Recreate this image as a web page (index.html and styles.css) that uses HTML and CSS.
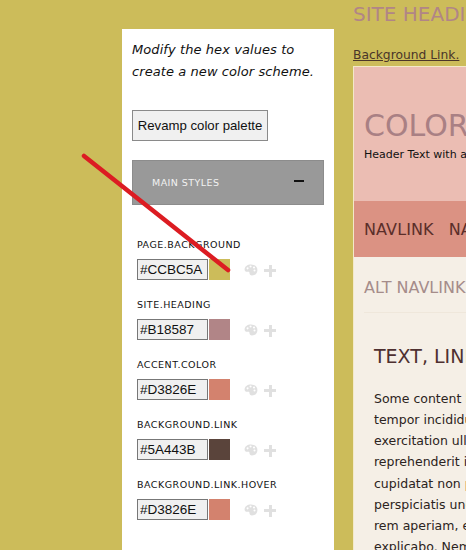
FILE: index.html
```html
<!DOCTYPE html>
<html lang="en">
<head>
  <meta charset="UTF-8">
  <title>Color scheme</title>
  <link rel="stylesheet" href="styles.css">
</head>
<body>
  <svg width="0" height="0" class="defs">
    <symbol id="palette" viewBox="0 0 16 14">
      <path fill-rule="evenodd" d="M8 .5C3.800.5.500 2.900.500 6.300c0 2.300 1.900 3.100 3.600 2.700 1.300-.3 2.100.2 2.100 1.200 0 1.900 1.100 3.300 2.900 3.300 3.900 0 6.400-3 6.400-6.600C15.500 3 12.200.5 8 .5zM4 6.300a1.200 1.200 0 1 1 0-2.400 1.200 1.200 0 0 1 0 2.400zM7.500 4.200a1.200 1.200 0 1 1 0-2.400 1.200 1.200 0 0 1 0 2.400zm4 1.100a1.200 1.200 0 1 1 0-2.400 1.200 1.200 0 0 1 0 2.400zm.6 3.500a1.200 1.200 0 1 1 0-2.400 1.200 1.200 0 0 1 0 2.400z"/>
    </symbol>
  </svg>

  <div class="page">
    <div class="sidebar">
      <p class="intro">Modify the hex values to create a new color scheme.</p>
      <button class="revamp">Revamp color palette</button>

      <div class="accordion">
        <span>Main Styles</span>
        <i class="minus"></i>
      </div>

      <div class="fields">
        <div class="field">
          <label>page.background</label>
          <div class="row">
            <input type="text" value="#CCBC5A">
            <b class="swatch swatch-page"></b>
            <svg class="palette"><use href="#palette"></use></svg>
            <i class="plus"></i>
          </div>
        </div>
        <div class="field">
          <label>site.heading</label>
          <div class="row">
            <input type="text" value="#B18587">
            <b class="swatch swatch-heading"></b>
            <svg class="palette"><use href="#palette"></use></svg>
            <i class="plus"></i>
          </div>
        </div>
        <div class="field">
          <label>accent.color</label>
          <div class="row">
            <input type="text" value="#D3826E">
            <b class="swatch swatch-accent"></b>
            <svg class="palette"><use href="#palette"></use></svg>
            <i class="plus"></i>
          </div>
        </div>
        <div class="field">
          <label>background.link</label>
          <div class="row">
            <input type="text" value="#5A443B">
            <b class="swatch swatch-link"></b>
            <svg class="palette"><use href="#palette"></use></svg>
            <i class="plus"></i>
          </div>
        </div>
        <div class="field">
          <label>background.link.hover</label>
          <div class="row">
            <input type="text" value="#D3826E">
            <b class="swatch swatch-accent"></b>
            <svg class="palette"><use href="#palette"></use></svg>
            <i class="plus"></i>
          </div>
        </div>
      </div>
    </div>

    <div class="preview">
      <h1 class="site-heading">SITE HEADING</h1>
      <a class="bg-link" href="#">Background Link.</a>
      <div class="box">
        <div class="box-header">
          <h2>COLOR SCHEME</h2>
          <p>Header Text with a description</p>
        </div>
        <div class="nav">
          <a href="#">NAVLINK</a>
          <a href="#">NAVLINK</a>
        </div>
        <div class="content">
          <div class="alt-nav">ALT NAVLINK</div>
          <h3>TEXT, LINKS</h3>
          <p>Some content lorem ipsum dolor sit amet, sed do eiusmod<br>
          tempor incididunt ut labore et dolore magna aliqua ut enim<br>
          exercitation ullamco laboris nisi ut aliquip ex ea commodo<br>
          reprehenderit in voluptate velit esse cillum dolore eu fugiat<br>
          cupidatat non proident, sunt in culpa qui officia deserunt<br>
          perspiciatis unde omnis iste natus error sit voluptatem<br>
          rem aperiam, eaque ipsa quae ab illo inventore veritatis<br>
          explicabo. Nemo enim ipsam voluptatem quia voluptas sit</p>
        </div>
      </div>
    </div>
  </div>

  <svg class="arrow" width="466" height="550">
    <line x1="84" y1="156" x2="228" y2="270"></line>
  </svg>
</body>
</html>
```

FILE: styles.css
```css
html, body {
  height: 100%;
}
body {
  margin: 0;
  background-color: #CCBC5A;
  overflow: hidden;
  font-family: 'DejaVu Sans', sans-serif;
}
.defs {
  display: block;
  height: 0;
}
.page {
  display: flex;
  height: 550px;
  padding-left: 122px;
}
.sidebar {
  flex: none;
  width: 212px;
  box-sizing: border-box;
  margin-top: 29px;
  padding: 10px 10px 0;
  background-color: #ffffff;
}
.intro {
  margin: 0;
  font-size: 13px;
  font-style: italic;
  line-height: 22px;
  letter-spacing: 0.08px;
  color: #111;
}
.revamp {
  display: block;
  width: 136px;
  height: 31px;
  margin-top: 27px;
  padding: 0;
  background-color: #f0f0f0;
  border: 1px solid #8a8a8a;
  font-family: 'Liberation Sans', sans-serif;
  font-size: 13.2px;
  color: #111;
}
.accordion {
  display: flex;
  align-items: center;
  justify-content: space-between;
  box-sizing: border-box;
  height: 45px;
  margin-top: 19px;
  padding: 0 19px;
  background-color: #999999;
  border: 1px solid #8c8c8c;
  color: #f2f2f2;
  font-size: 9.5px;
  letter-spacing: 0.45px;
  text-transform: uppercase;
}
.minus {
  width: 10px;
  height: 2px;
  margin-bottom: 3px;
  background-color: #111;
}
.fields {
  display: flex;
  flex-direction: column;
  gap: 18px;
  margin-top: 33px;
  padding-left: 5px;
}
.field label {
  display: block;
  height: 14px;
  margin-bottom: 6px;
  font-size: 9.5px;
  line-height: 14px;
  letter-spacing: 0.5px;
  text-transform: uppercase;
  color: #111;
}
.row {
  display: flex;
  align-items: center;
  height: 22px;
}
.row input {
  box-sizing: border-box;
  width: 71px;
  height: 21px;
  padding: 0 2px;
  background-color: #f0f0f0;
  border: 1px solid #777;
  font-family: 'Liberation Sans', sans-serif;
  font-size: 13.5px;
  color: #111;
}
.swatch {
  width: 21px;
  height: 21px;
  margin-left: 1px;
  border: 0;
}
.swatch-page { background-color: #CCBC5A; }
.swatch-heading { background-color: #B18587; }
.swatch-accent { background-color: #D3826E; }
.swatch-link { background-color: #5A443B; }
.palette {
  width: 14px;
  height: 12px;
  margin-top: 2px;
  margin-left: 14px;
  fill: #e0e0e0;
}
.plus {
  width: 12px;
  height: 12px;
  margin-top: 3px;
  margin-left: 6px;
  background:
    linear-gradient(#e0e0e0, #e0e0e0) center / 12px 3px no-repeat,
    linear-gradient(#e0e0e0, #e0e0e0) center / 3px 12px no-repeat;
}
.preview {
  flex: none;
  width: 500px;
  margin-left: 19px;
}
.site-heading {
  margin: 3px 0 0;
  font-size: 20px;
  font-weight: normal;
  line-height: 22px;
  color: #B18587;
  white-space: nowrap;
}
.bg-link {
  display: block;
  margin-top: 20px;
  font-size: 12.3px;
  line-height: 21px;
  color: #4a3529;
}
.box {
  border-top: 1px solid #f3e9c9;
  border-left: 1px solid #f3e9c9;
}
.box-header {
  box-sizing: border-box;
  height: 134px;
  padding: 41px 10px 0;
  background-color: #EBBDB3;
  white-space: nowrap;
}
.box-header h2 {
  margin: 0;
  font-size: 30px;
  font-weight: normal;
  line-height: 36px;
  color: #A98084;
}
.box-header p {
  margin: 3px 0 0;
  font-size: 11px;
  line-height: 16px;
  color: #111;
}
.nav {
  display: flex;
  gap: 15px;
  box-sizing: border-box;
  height: 56px;
  padding: 0 10px;
  align-items: center;
  background-color: #DB9283;
}
.nav a {
  font-size: 16px;
  letter-spacing: 0.1px;
  color: #5A2E2A;
  text-decoration: none;
}
.content {
  height: 300px;
  background-color: #F5EFE6;
}
.alt-nav {
  box-sizing: border-box;
  height: 56px;
  margin-left: 10px;
  padding-top: 21px;
  border-bottom: 1px solid #efe7db;
  font-size: 16px;
  line-height: 20px;
  color: #A58C8A;
}
.content h3 {
  margin: 31px 0 0 20px;
  font-size: 19px;
  font-weight: normal;
  line-height: 24px;
  color: #4e3030;
  white-space: nowrap;
}
.content p {
  margin: 20px 0 0 20px;
  font-size: 12.5px;
  line-height: 21.15px;
  color: #2b2320;
  white-space: nowrap;
}
.arrow {
  position: absolute;
  left: 0;
  top: 0;
  pointer-events: none;
}
.arrow line {
  stroke: #dc1c22;
  stroke-width: 4.5;
  stroke-linecap: round;
}
```
